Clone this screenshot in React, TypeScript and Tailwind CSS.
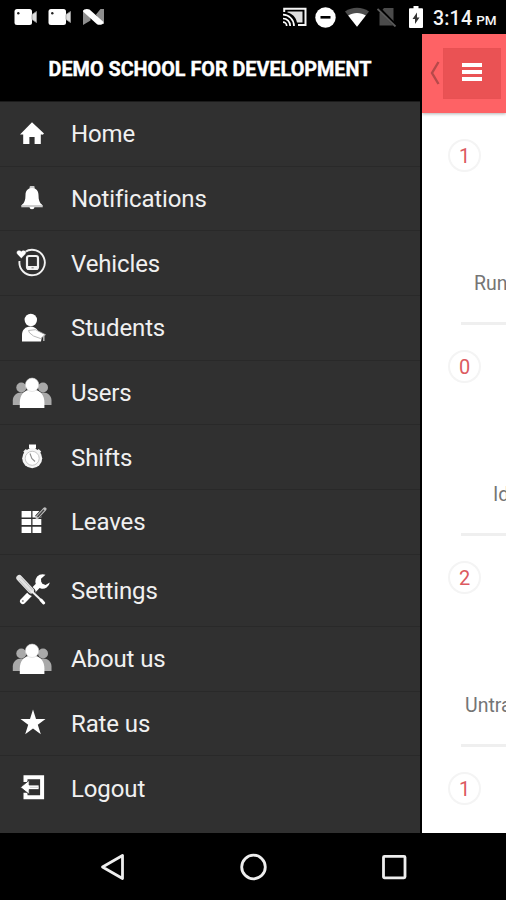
import type { ReactNode } from "react";

function HomeIcon() {
  return (
    <path d="M20 8.2 32 19.5 30.500 21 V20.500 H28.8 V30 H22.6 V23 H17.4 V30 H11.2 V20.500 H8 Z" fill="#fff" />
  );
}

function BellIcon() {
  return (
    <>
      <rect x="17.600" y="7" width="5" height="5" rx="1" fill="#ccc" />
      <path d="M20 9c4.300 0 6.500 3 6.500 7 0 5 1 8 3.600 9.700V27.500H9.900v-1.800c2.600-1.700 3.600-4.700 3.600-9.700 0-4 2.200-7 6.500-7Z" fill="#fff" />
      <path d="M9.300 26h21.400v2.300H9.300Z" fill="#ccc" />
      <path d="M17.500 28h5a2.500 2.200 0 0 1-5 0Z" fill="#fff" />
    </>
  );
}

function VehicleIcon() {
  return (
    <>
      <path d="M13 9A12.700 12.700 0 1 1 7.500 18" fill="none" stroke="#f2f2f2" strokeWidth="1.900" />
      <path d="M9.300 15.500 5 11c-1.700-2.500 1.700-5.300 4.300-2.800 2.600-2.500 6 .3 4.300 2.800Z" fill="#fff" stroke="#303030" strokeWidth=".4" />
      <rect x="15" y="13" width="11" height="13" rx="2" fill="none" stroke="#f2f2f2" strokeWidth="2.200" />
      <path d="M15 23h11v3.500H15Z" fill="#f2f2f2" />
      <path d="M19.500 24.800h2.200" stroke="#777" strokeWidth="1" />
    </>
  );
}

function StudentIcon() {
  return (
    <>
      <circle cx="18.800" cy="12" r="6.200" fill="#fff" />
      <path d="M10 33.500V27c0-5 3.300-8.500 8.500-8.500 3.200 0 6 1.500 7.600 4.500l3.900 5-1 5.500Z" fill="#fff" />
      <path d="m16.500 22.500 7-.8 10 5-5 3.800-7-2.500-4-3.200Z" fill="#fff" stroke="#a5a5a5" strokeWidth=".8" />
      <path d="M31.800 27.500v5.500" stroke="#bbb" strokeWidth="1.400" />
    </>
  );
}

function UsersIcon() {
  return (
    <>
      <g fill="#a9a9a9">
        <circle cx="9.300" cy="14.500" r="5" />
        <circle cx="31" cy="14.500" r="5" />
        <path d="M.8 32V27.500c0-4.500 3.500-8 8.500-8s8.500 3.500 8.500 8V32Z" />
        <path d="M22.500 32V27.500c0-4.500 3.500-8 8.500-8s8.500 3.500 8.500 8V32Z" />
      </g>
      <path d="M7.800 35v-5.500c0-7 3.800-11.500 8.500-12.500h7.600c4.700 1 8.500 5.500 8.500 12.500V35Z" fill="#fff" />
      <circle cx="20.100" cy="11.800" r="6.700" fill="#fff" stroke="#d5d5d5" strokeWidth=".6" />
    </>
  );
}

function StopwatchIcon() {
  return (
    <>
      <path d="M17 7.500h7v3L22.500 14h-4L17 10.500Z" fill="#fff" />
      <path d="m11.300 14.500 2.500-2.500 3 2.500-3 3.500ZM29.200 14.500 26.700 12l-3 2.500 3 3.500Z" fill="#eee" />
      <circle cx="20.200" cy="21.300" r="10" fill="#f4f4f4" />
      <circle cx="20.200" cy="21.300" r="7" fill="#fff" stroke="#b8b8b8" strokeWidth=".8" />
      <path d="m18 16.500 1.800 5 3.200 3" stroke="#8c8c8c" strokeWidth="1.100" fill="none" />
    </>
  );
}

function LeavesIcon() {
  return (
    <>
      <g fill="#fff">
        <path d="M9.600 9h9.600v6.500H9.600ZM9.600 17h9.600v6H9.600ZM9.600 24.800h9.600v6.200H9.600Z" />
        <path d="M20.500 9h8.800v6.500h-8.800ZM20.500 17h8.800v6h-8.800ZM20.500 24.800h8.800v6.200h-8.800Z" />
      </g>
      <path d="m25 15.500 8-9" stroke="#303030" strokeWidth="5" />
      <path d="m25 15.500 7.800-8.500" stroke="#bdbdbd" strokeWidth="3.400" strokeLinecap="round" />
      <path d="m25.500 15 6.500-7.200" stroke="#444" strokeWidth="1.400" />
    </>
  );
}

function SettingsIcon() {
  return (
    <>
      <path d="m10.800 31.300 16.500-17" stroke="#fff" strokeWidth="5.600" strokeLinecap="round" />
      <path d="M33.500 4.800a7.300 7.300 0 1 0 4.300 7.800l-4.300 2.300-4.200-1.700-.3-4.400Z" fill="#fff" />
      <circle cx="10.800" cy="31" r="1" fill="#888" />
      <path d="m17 21 15.200 14" stroke="#303030" strokeWidth="3.200" />
      <path d="m6.500 8 13 13.500" stroke="#303030" strokeWidth="7.800" strokeLinecap="round" />
      <path d="m7.300 8 11.700 12.500" stroke="#e2e2e2" strokeWidth="6" strokeLinecap="round" />
      <path d="m9 7.500 12 13M7 10l11.500 12.500" stroke="#b0b0b0" strokeWidth=".7" />
      <path d="m19.500 21 10.500 10" stroke="#f2f2f2" strokeWidth="2" />
      <path d="m29 30 2.700 3" stroke="#fff" strokeWidth="3" strokeLinecap="round" />
    </>
  );
}

function StarIcon() {
  return (
    <path d="m21 6.500 3 9.500h9.500l-7.700 5.700 3 9.600-7.800-5.800-7.800 5.800 3-9.600L8.500 16H18Z" fill="#fff" />
  );
}

function LogoutIcon() {
  return (
    <>
      <path d="M13.500 14V9.300h16.600v19.900H13.500v-4.500" fill="none" stroke="#fff" strokeWidth="4" />
      <path d="M8.500 19.300 17.200 12.300V17H27v4.600H17.200v4.700Z" fill="#fff" stroke="#303030" strokeWidth=".8" />
      <path d="M18 19.300h8.500" stroke="#ccc" strokeWidth="1" />
    </>
  );
}

type Item = { label: string; icon: ReactNode; row?: string };

const items: Item[] = [
  { label: "Home", icon: <HomeIcon /> },
  { label: "Notifications", icon: <BellIcon /> },
  { label: "Vehicles", icon: <VehicleIcon /> },
  { label: "Students", icon: <StudentIcon /> },
  { label: "Users", icon: <UsersIcon /> },
  { label: "Shifts", icon: <StopwatchIcon /> },
  { label: "Leaves", icon: <LeavesIcon /> },
  { label: "Settings", icon: <SettingsIcon />, row: "h-[72px]" },
  { label: "About us", icon: <UsersIcon /> },
  { label: "Rate us", icon: <StarIcon /> },
  { label: "Logout", icon: <LogoutIcon /> },
];

const cards = [
  { count: 1, label: "Running", pad: "pl-[52px]" },
  { count: 0, label: "Idle", pad: "pl-[71px]" },
  { count: 2, label: "Untracked", pad: "pl-[43px]" },
  { count: 1, label: "", pad: "" },
];

function CameraIcon() {
  return (
    <svg width="24" height="18" viewBox="0 0 24 18">
      <rect x=".5" y="1" width="17.500" height="16" rx="2.500" fill="#fff" />
      <path d="M18 6.500 22.500 3.500v11L18 11.500Z" fill="#ddd" stroke="#999" strokeWidth=".8" />
      <circle cx="4.300" cy="5.200" r="1.200" fill="#222" />
    </svg>
  );
}

function StatusBar() {
  return (
    <div className="flex h-[34px] shrink-0 items-center bg-black pl-[14px]">
      <div className="flex gap-[10px]">
        <CameraIcon />
        <CameraIcon />
      </div>
      <svg width="22" height="18" viewBox="0 0 22 18" className="ml-[11px]">
        <path d="M0 2v15l7.500-4.500V5ZM13 6.500 17.500 1H21v15h-4Z" fill="#8e8e8e" />
        <path d="M0 3.500C0 .8 4.500.5 6.500 1.500L20.500 14c0 3-4.500 3.300-6.500 2.300Z" fill="#fff" />
      </svg>
      <svg width="24" height="20" viewBox="0 0 24 20" className="ml-[178px]">
        <path d="M1.200 5V1.700h21.300v16.300H15" fill="none" stroke="#f5f5f5" strokeWidth="2" />
        <path d="M4.500 5.500V4.500H19.500v11H14C13 10 9 6.500 4.500 5.500Z" fill="#e0e0e0" />
        <path d="M0 7.700c6 0 11 5 11 11.300M0 11.500c4 0 7.200 3.200 7.200 7.500M0 15.100c2.200 0 3.700 1.800 3.700 3.900" fill="none" stroke="#fff" strokeWidth="1.700" />
      </svg>
      <svg width="21" height="21" viewBox="0 0 21 21" className="ml-2">
        <circle cx="10.500" cy="10.500" r="10.200" fill="#fff" />
        <path d="M5.500 10.300h10" stroke="#000" strokeWidth="2.600" />
      </svg>
      <svg width="24" height="20" viewBox="0 0 24 20" className="ml-[9px]">
        <path d="M0 4.500C7-.5 17-.5 24 4.500L12 19.800Z" fill="#4d4d4d" />
        <path d="M3.200 8.500C8 5 16 5 20.800 8.500L12 19.800Z" fill="#fff" />
      </svg>
      <svg width="20" height="20" viewBox="0 0 20 20" className="ml-2">
        <path d="M2.500 18.500V6L7 1h9.500v17.500Z" fill="#4b4b4b" />
        <path d="M1.500 1 19 19" stroke="#000" strokeWidth="3.500" />
        <path d="m.5 2 18 17.500" stroke="#5b5b5b" strokeWidth="1.800" />
      </svg>
      <svg width="14" height="22" viewBox="0 0 14 22" className="ml-[12px]">
        <path d="M4.500 0h5v2.200H13a1 1 0 0 1 1 1V21a1 1 0 0 1-1 1H1a1 1 0 0 1-1-1V3.200a1 1 0 0 1 1-1h3.500Z" fill="#fff" />
        <path d="M8 6.500v5h2.500l-4.500 6.500v-5H3.500Z" fill="#333" />
      </svg>
      <div className="ml-[10px] mt-[4px] flex items-baseline whitespace-nowrap leading-none text-[#f5f5f5]">
        <span className="text-[19.500px] font-medium tracking-[0.200px]">3:14</span>
        <span className="ml-1 text-[13.500px] font-medium">PM</span>
      </div>
    </div>
  );
}

function Drawer() {
  return (
    <div className="flex w-[422px] shrink-0 flex-col border-r-2 border-black bg-[#303030]">
      <div className="flex h-[68px] shrink-0 items-center justify-center border-b border-[#1b1b1b] bg-black pt-[4px]">
        <h1 className="whitespace-nowrap text-[19.800px] font-bold leading-none text-white [-webkit-text-stroke:0.400px_white]">
          DEMO SCHOOL FOR DEVELOPMENT
        </h1>
      </div>
      <ul>
        {items.map((item) => (
          <li
            key={item.label}
            className={`${item.row ?? "h-[64.700px]"} flex items-center border-b border-[#292929] pl-3 last:border-transparent`}
          >
            <svg width="40" height="40" viewBox="0 0 40 40" className="shrink-0">
              {item.icon}
            </svg>
            <span className="ml-[19px] pt-px text-[24px] leading-none tracking-[-0.120px] text-[#f0f0f0]">
              {item.label}
            </span>
          </li>
        ))}
      </ul>
    </div>
  );
}

function Dashboard() {
  return (
    <div className="flex min-w-0 flex-1 flex-col overflow-hidden bg-white">
      <div className="flex h-[79px] shrink-0 items-center bg-[#fe6265] pb-px shadow-[0_1px_3px_rgba(0,0,0,0.3)]">
        <svg width="10" height="24" viewBox="0 0 10 24" className="ml-[8px]">
          <path d="M8.500 1 2 12l6.500 11" fill="none" stroke="#b7494a" strokeWidth="2.400" />
        </svg>
        <div className="ml-[3px] flex h-[51px] w-[58px] shrink-0 flex-col items-center justify-center gap-[3px] border border-[#e85153] bg-[#ea5254] pb-[3px]">
          <div className="h-1 w-5 bg-white" />
          <div className="h-1 w-5 bg-white" />
          <div className="h-1 w-5 bg-white" />
        </div>
      </div>
      <div className="pt-[26px]">
        {cards.map((card, i) => (
          <div key={i} className="h-[211px]">
            <div className="ml-[26px] flex h-[33px] w-[33px] items-center justify-center rounded-full border-2 border-[#f4f4f4] pt-px text-[20px] leading-none text-[#dc5a60]">
              {card.count}
            </div>
            {card.label && (
              <>
                <div className={`${card.pad} mt-[102px] text-[19.500px] leading-5 text-[#757575]`}>{card.label}</div>
                <div className="ml-[39px] mt-[28px] h-[3px] bg-[#efefef]" />
              </>
            )}
          </div>
        ))}
      </div>
    </div>
  );
}

function NavBar() {
  return (
    <div className="flex h-[67px] shrink-0 items-center bg-black pl-[100px]">
      <svg width="26" height="28" viewBox="0 0 26 28">
        <path d="M2.500 14 22.500 2.500v23Z" fill="none" stroke="#eee" strokeWidth="2.800" strokeLinejoin="round" />
      </svg>
      <svg width="28" height="28" viewBox="0 0 28 28" className="ml-[114px]">
        <circle cx="13.500" cy="14" r="11.800" fill="none" stroke="#eee" strokeWidth="2.800" />
      </svg>
      <svg width="26" height="28" viewBox="0 0 26 28" className="ml-[113px]">
        <rect x="2.500" y="3.300" width="21.500" height="21.500" rx="1" fill="none" stroke="#eee" strokeWidth="2.800" />
      </svg>
    </div>
  );
}

export default function App() {
  return (
    <div className="flex h-[900px] w-[506px] flex-col overflow-hidden bg-black font-[Roboto,sans-serif]">
      <StatusBar />
      <div className="flex h-[799px] shrink-0 overflow-hidden">
        <Drawer />
        <Dashboard />
      </div>
      <NavBar />
    </div>
  );
}
